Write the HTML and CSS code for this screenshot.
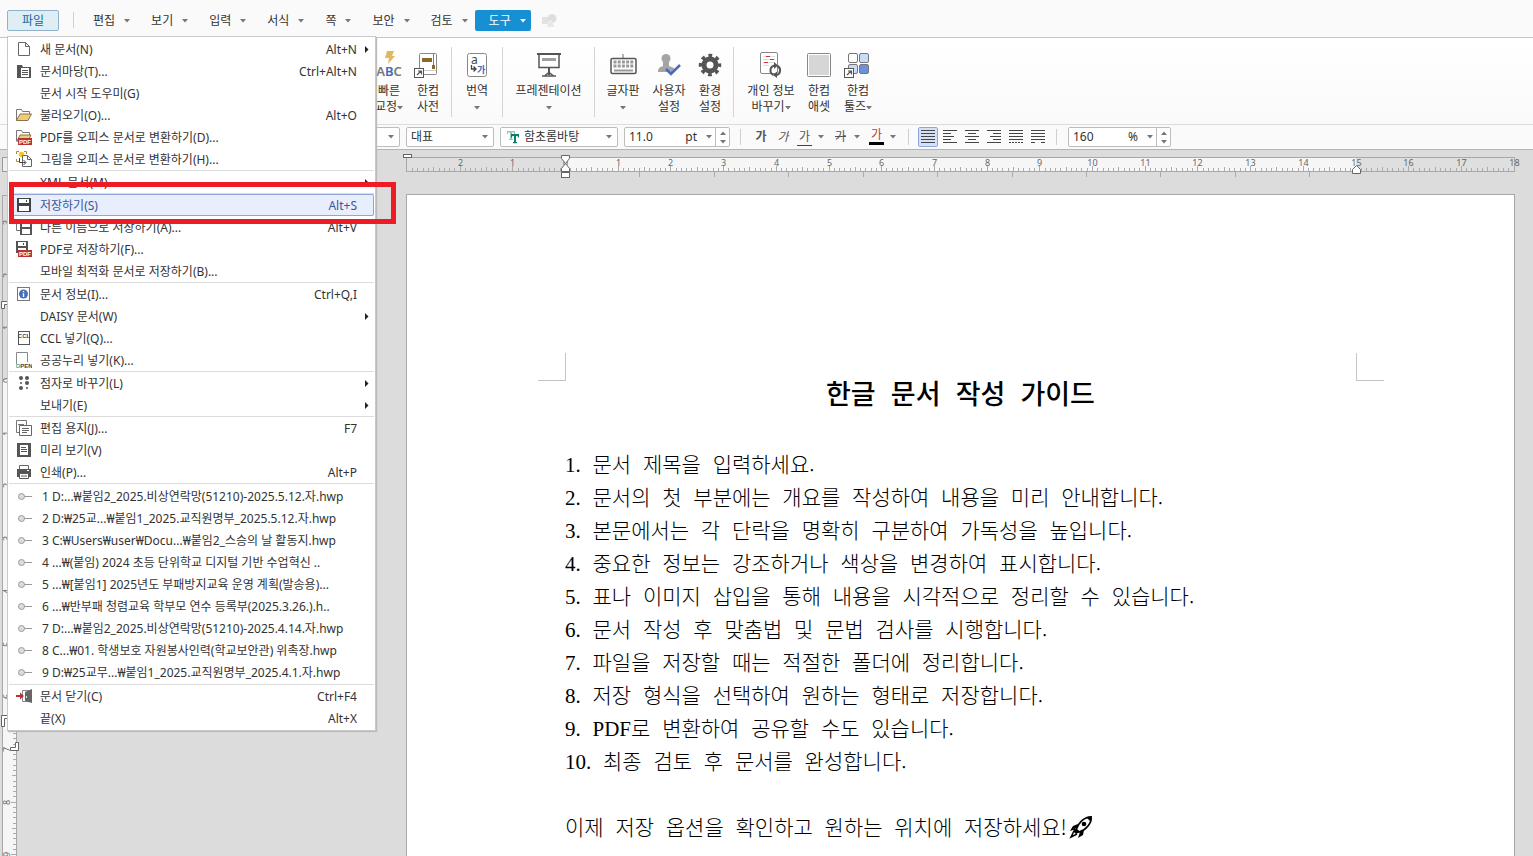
FILE: index.html
```html
<!DOCTYPE html>
<html lang="ko">
<head>
<meta charset="utf-8">
<title>한글 문서 작성 가이드</title>
<link rel="stylesheet" href="styles.css">
</head>
<body>
<svg class="defs" aria-hidden="true">
  <symbol id="down" viewBox="0 0 6 4"><path d="M0 0h6L3 3.5z" fill="currentColor"/></symbol>
  <symbol id="right" viewBox="0 0 5 7"><path d="M1 0v7l3.500-3.500z" fill="#222"/></symbol>
  <symbol id="pin" viewBox="0 0 16 16"><path d="M8 8.500h8" stroke="#999"/><circle cx="5.500" cy="8.500" r="3" fill="#ddd" stroke="#999"/></symbol>
</svg>

<header class="menubar">
  <button class="file-btn" type="button">파일</button>
  <span class="bar-sep"></span>
  <nav class="tabs">
    <button type="button">편집<svg class="down"><use href="#down"/></svg></button>
    <button type="button">보기<svg class="down"><use href="#down"/></svg></button>
    <button type="button">입력<svg class="down"><use href="#down"/></svg></button>
    <button type="button">서식<svg class="down"><use href="#down"/></svg></button>
    <button type="button">쪽<svg class="down"><use href="#down"/></svg></button>
    <button type="button">보안<svg class="down"><use href="#down"/></svg></button>
    <button type="button">검토<svg class="down"><use href="#down"/></svg></button>
    <button type="button" class="active">도구<svg class="down"><use href="#down"/></svg></button>
  </nav>
  <svg class="shapes" viewBox="0 0 15 13"><path d="M0 3h7v7H0z" fill="#e2e2e2"/><circle cx="10" cy="4.500" r="4.500" fill="#dedede"/><path d="M4 13l4.500-7 4.500 7z" fill="#e6e6e6" stroke="#fafafa" stroke-width=".6"/></svg>
</header>

<section class="ribbon">
  <button type="button" class="tool w-s">
    <svg viewBox="0 0 28 28"><path d="M12 0h7l-2 5h3l-7 8 1-6h-4z" fill="#e0b860"/><text x="14" y="25" text-anchor="middle" class="abc">A<tspan fill="#4468b8">B</tspan>C</text></svg>
    <span>빠른<br>교정<svg class="down"><use href="#down"/></svg></span>
  </button>
  <button type="button" class="tool w-m">
    <svg viewBox="0 0 28 28"><rect x="5.500" y="2.500" width="17" height="21" rx="1" fill="#fff" stroke="#888"/><path d="M19.500 3v14" stroke="#9c7a3c"/><path d="M8 7h10v4H8zM18 14h3v4h-3z" fill="#8a6a2c"/><path d="M6 19.500h16" stroke="#ccc"/><rect x=".5" y="17.500" width="9" height="9" fill="#fff" stroke="#555"/><path d="M3 24l4-4M4 20h3.500v3.500" fill="none" stroke="#555" stroke-width="1.200"/></svg>
    <span>한컴<br>사전</span>
  </button>
  <span class="ribbon-sep"></span>
  <button type="button" class="tool w-t">
    <svg viewBox="0 0 28 28"><rect x="4.500" y="2.500" width="19" height="23" rx="2" fill="#fff" stroke="#888"/><text x="8" y="13" font-size="12" fill="#444">a</text><path d="M8.500 14v4h4M10.500 15.500l2.500 2.500-2.500 2.500" fill="none" stroke="#444" stroke-width="1.300"/><text x="14" y="22" font-size="9" font-weight="700" fill="#4468b8">가</text></svg>
    <span>번역<br><svg class="down"><use href="#down"/></svg></span>
  </button>
  <span class="ribbon-sep"></span>
  <button type="button" class="tool w-p">
    <svg viewBox="0 0 28 28"><path d="M2 2h24v2H2z" fill="#555"/><path d="M4 4v12.500h20V4" fill="#fff" stroke="#555" stroke-width="1.500"/><path d="M7 7h14v3H7z" fill="#a0a0a0"/><path d="M14 17v7" stroke="#555" stroke-width="2"/><path d="M10 24.500l4-3 4 3M7 25h14" fill="none" stroke="#555" stroke-width="1.500"/></svg>
    <span>프레젠테이션<br><svg class="down"><use href="#down"/></svg></span>
  </button>
  <span class="ribbon-sep"></span>
  <button type="button" class="tool w-k">
    <svg viewBox="0 0 28 28"><path d="M14 3v5" stroke="#666"/><rect x="2" y="7.500" width="25" height="15" rx="1.500" fill="#fff" stroke="#555" stroke-width="1.500"/><path d="M4.500 11h20M4.500 15h20" stroke="#999" stroke-width="3" stroke-dasharray="3 1.200"/><path d="M5 19.500h19" stroke="#999" stroke-width="2"/></svg>
    <span>글자판<br><svg class="down"><use href="#down"/></svg></span>
  </button>
  <button type="button" class="tool w-u">
    <svg viewBox="0 0 28 28"><circle cx="11" cy="7.500" r="4.500" fill="#a5a5a5"/><path d="M8 11h6v4l5 2v4H3c0-4 2-5 5-6z" fill="#a5a5a5"/><path d="M11 18l5 5 9-9" fill="none" stroke="#4a6cb8" stroke-width="2.500"/></svg>
    <span>사용자<br>설정</span>
  </button>
  <button type="button" class="tool w-m">
    <svg viewBox="0 0 28 28"><circle cx="14" cy="14" r="6" fill="none" stroke="#555" stroke-width="5"/><circle cx="14" cy="14" r="9.500" fill="none" stroke="#555" stroke-width="3.500" stroke-dasharray="3.730 3.730" stroke-dashoffset="1.865"/></svg>
    <span>환경<br>설정</span>
  </button>
  <span class="ribbon-sep"></span>
  <button type="button" class="tool w-i">
    <svg viewBox="0 0 28 28"><rect x="3.500" y="1.500" width="17" height="21" rx="1.500" fill="#fff" stroke="#888"/><path d="M6 5.500h12M6 8.500h12M6 11.500h12M6 14.500h6" stroke="#ddd"/><path d="M9 5.500h4M13 8.500h4M7 11.500h4" stroke="#c33"/><path d="M16.500 24a5 5 0 0 1 1-9.500M20.500 15a5 5 0 0 1-.5 9" fill="none" stroke="#555" stroke-width="2"/><path d="M17 11l4 3.500-4 3.500zM20 20.500l-4 3.500 4 3z" fill="#555"/></svg>
    <span>개인 정보<br>바꾸기<svg class="down"><use href="#down"/></svg></span>
  </button>
  <button type="button" class="tool w-a">
    <svg viewBox="0 0 28 28"><rect x="2.500" y="2.500" width="23" height="23" rx="1" fill="#fff" stroke="#888"/><rect x="4" y="4" width="20" height="20" rx="1" fill="#d6d6d6"/></svg>
    <span>한컴<br>애셋</span>
  </button>
  <button type="button" class="tool w-k">
    <svg viewBox="0 0 28 28"><g stroke="#777"><rect x="4.500" y="2.500" width="9" height="9" rx="1.500" fill="#fff"/><rect x="15.500" y="2.500" width="9" height="9" rx="1.500" fill="#c9dafa"/><rect x="4.500" y="13.500" width="9" height="9" rx="1.500" fill="#c9dafa"/><rect x="15.500" y="13.500" width="9" height="9" rx="1.500" fill="#6a90de"/></g><rect x=".5" y="17.500" width="9" height="9" fill="#fff" stroke="#555"/><path d="M3 24l4-4M4 20h3.500v3.500" fill="none" stroke="#555" stroke-width="1.200"/></svg>
    <span>한컴<br>툴즈<svg class="down"><use href="#down"/></svg></span>
  </button>
</section>

<section class="format">
  <label class="combo style"><select aria-label="스타일"><option></option></select><svg class="down"><use href="#down"/></svg></label>
  <label class="combo lang"><select aria-label="언어"><option>대표</option></select><svg class="down"><use href="#down"/></svg></label>
  <label class="combo font"><svg class="tt" viewBox="0 0 14 14"><path d="M1 1h8v3H8V2.500H6V9h1v1H3V9h1V2.500H2V4H1z" fill="#8fcbb4"/><path d="M5 4h8v3.500h-1.200V6H10v6h1v1.200H7V12h1V6H6.200v1.500H5z" fill="#0b7f6d"/></svg><select aria-label="글꼴"><option>함초롬바탕</option></select><svg class="down"><use href="#down"/></svg></label>
  <div class="combo size"><input type="text" value="11.0" aria-label="글자 크기"><span>pt</span><svg class="down"><use href="#down"/></svg><div class="spin"><button type="button" aria-label="크게"><svg class="down up"><use href="#down"/></svg></button><button type="button" aria-label="작게"><svg class="down"><use href="#down"/></svg></button></div></div>
  <span class="bar-sep"></span>
  <div class="styles">
    <button type="button" class="bold">가</button>
    <button type="button" class="italic">가</button>
    <button type="button" class="wide"><span class="under">가</span><svg class="down"><use href="#down"/></svg></button>
    <button type="button" class="wide"><span class="strike">가</span><svg class="down"><use href="#down"/></svg></button>
    <button type="button" class="wide"><span class="color">가</span><svg class="down"><use href="#down"/></svg></button>
  </div>
  <span class="bar-sep"></span>
  <div class="aligns">
    <button type="button" class="on" aria-label="양쪽 정렬"><svg viewBox="0 0 14 14"><path d="M0 .5h14M0 3.500h14M0 6.500h14M0 9.500h14M0 12.500h14"/></svg></button>
    <button type="button" aria-label="왼쪽 정렬"><svg viewBox="0 0 14 14"><path d="M0 .5h14M0 3.500h8M0 6.500h11M0 9.500h8M0 12.500h14"/></svg></button>
    <button type="button" aria-label="가운데 정렬"><svg viewBox="0 0 14 14"><path d="M0 .5h14M3 3.500h8M0 6.500h14M3 9.500h8M0 12.500h14"/></svg></button>
    <button type="button" aria-label="오른쪽 정렬"><svg viewBox="0 0 14 14"><path d="M0 .5h14M6 3.500h8M3 6.500h11M6 9.500h8M0 12.500h14"/></svg></button>
    <button type="button" aria-label="배분 정렬"><svg viewBox="0 0 14 14"><path d="M0 .5h14M0 3.500h14M0 6.500h14M0 9.500h14"/><path d="M0 12.500h14" stroke-dasharray="2 1"/></svg></button>
    <button type="button" aria-label="나눔 정렬"><svg viewBox="0 0 14 14"><path d="M0 .5h14M0 3.500h14M0 6.500h14M0 9.500h14M0 12.500h4M10 12.500h4"/></svg></button>
  </div>
  <span class="bar-sep"></span>
  <div class="combo zoom"><input type="text" value="160" aria-label="줄 간격"><span>%</span><svg class="down"><use href="#down"/></svg><div class="spin"><button type="button" aria-label="늘리기"><svg class="down up"><use href="#down"/></svg></button><button type="button" aria-label="줄이기"><svg class="down"><use href="#down"/></svg></button></div></div>
</section>

<main class="work">
  <svg class="vruler" id="vruler" aria-hidden="true"></svg>
  <div class="desk">
    <svg class="hruler" id="hruler" aria-hidden="true"></svg>
    <article class="page">
      <div class="corners"><span class="corner left"></span><span class="corner right"></span></div>
      <div class="body">
        <h1>한글  문서  작성  가이드</h1>
        <p><span class="num">1.</span>  문서  제목을  입력하세요.</p>
        <p><span class="num">2.</span>  문서의  첫  부분에는  개요를  작성하여  내용을  미리  안내합니다.</p>
        <p><span class="num">3.</span>  본문에서는  각  단락을  명확히  구분하여  가독성을  높입니다.</p>
        <p><span class="num">4.</span>  중요한  정보는  강조하거나  색상을  변경하여  표시합니다.</p>
        <p><span class="num">5.</span>  표나  이미지  삽입을  통해  내용을  시각적으로  정리할  수  있습니다.</p>
        <p><span class="num">6.</span>  문서  작성  후  맞춤법  및  문법  검사를  시행합니다.</p>
        <p><span class="num">7.</span>  파일을  저장할  때는  적절한  폴더에  정리합니다.</p>
        <p><span class="num">8.</span>  저장  형식을  선택하여  원하는  형태로  저장합니다.</p>
        <p><span class="num">9.</span>  <span class="num">PDF</span>로  변환하여  공유할  수도  있습니다.</p>
        <p><span class="num">10.</span>  최종  검토  후  문서를  완성합니다.</p>
        <p class="last">이제  저장  옵션을  확인하고  원하는  위치에  저장하세요!<svg class="rocket" viewBox="0 0 24 24"><path d="M7 15C9 8 15 2 22 2c1 6-5 13-12 15z" fill="none" stroke="#000" stroke-width="1.700"/><path d="M17 2l5 5 1-6z"/><circle cx="15" cy="9" r="2.300"/><path d="M9 9L4 11l-3 5 6-2zM15 15l-1 5-5 3 2-6zM7 13l4 4-4 2-3-3z"/><path d="M5 16l-3 6 6-3" fill="none" stroke="#000" stroke-width="1.500"/></svg></p>
      </div>
    </article>
  </div>
</main>

<div class="menu" role="menu">
  <button type="button"><svg class="ic" viewBox="0 0 16 16"><path d="M2.500 1.500h7l4 4v9h-11zM9.500 1.500v4h4" fill="#fff" stroke="#666"/></svg><span>새 문서(N)</span><kbd>Alt+N</kbd><svg class="sub"><use href="#right"/></svg></button>
  <button type="button"><svg class="ic" viewBox="0 0 16 16"><path d="M1 2h5l1 2h8v11H1z" fill="#555"/><path d="M5 5h8v9H5z" fill="#fff"/><path d="M6 7.500h6M6 9.500h6M6 11.500h6" stroke="#555"/></svg><span>문서마당(T)...</span><kbd>Ctrl+Alt+N</kbd></button>
  <button type="button"><i class="ic"></i><span>문서 시작 도우미(G)</span></button>
  <button type="button"><svg class="ic" viewBox="0 0 16 16"><path d="M.5 13.500v-11h5l1 2h7V7" fill="#fff" stroke="#777"/><path d="M.5 13.500L4 7h11.500L12 13.500z" fill="#efcb7c" stroke="#8c7440"/></svg><span>불러오기(O)...</span><kbd>Alt+O</kbd></button>
  <button type="button"><svg class="ic" viewBox="0 0 16 16"><path d="M.5 12.500v-11h5l1 2h7V6" fill="#fff" stroke="#777"/><path d="M1 12l3-6h11l-3 6z" fill="#efcb7c" stroke="#8c7440"/><path d="M2 9h14v7H2z" fill="#b93336"/><text x="9" y="15" class="tag">PDF</text></svg><span>PDF를 오피스 문서로 변환하기(D)...</span></button>
  <button type="button"><svg class="ic" viewBox="0 0 16 16"><path d="M.5 3V.5H3M8 .5h2.500V3M.5 8v2.500H3" fill="none" stroke="#b18b36"/><circle cx="5.500" cy="3.500" r="2.800" fill="#f3c72d"/><path d="M6.500 4.500h5l4 4v7h-9z" fill="#fff" stroke="#666"/><path d="M11.500 4.500v4h4" fill="none" stroke="#666"/><path d="M3.500 7v4.500h6M7.500 9l2.500 2.500L7.500 14" fill="none" stroke="#444"/></svg><span>그림을 오피스 문서로 변환하기(H)...</span></button>
  <hr>
  <button type="button"><i class="ic"></i><span>XML 문서(M)</span><svg class="sub"><use href="#right"/></svg></button>
  <hr>
  <button type="button" class="hot"><svg class="ic" viewBox="0 0 16 16"><path d="M1 1h14v14H1z" fill="#444"/><path d="M3 2h10v4H3zM3 9h10v5H3z" fill="#fff"/><path d="M10 3h1v2h-1z" fill="#444"/></svg><span>저장하기(S)</span><kbd>Alt+S</kbd></button>
  <button type="button"><svg class="ic" viewBox="0 0 16 16"><path d="M.5 1.500h9v10h-9z" fill="#fff" stroke="#777"/><path d="M4 3h12v13H4z" fill="#555"/><path d="M6 4h8v4H6zM6 10h8v5H6z" fill="#fff"/></svg><span>다른 이름으로 저장하기(A)...</span><kbd>Alt+V</kbd></button>
  <button type="button"><svg class="ic" viewBox="0 0 16 16"><path d="M0 0h12v12H0z" fill="#555"/><path d="M2 1h8v4H2zM2 7h8v4H2z" fill="#fff"/><path d="M7 2h1v2H7z" fill="#444"/><path d="M2 9h14v7H2z" fill="#b93336"/><text x="9" y="15" class="tag">PDF</text></svg><span>PDF로 저장하기(F)...</span></button>
  <button type="button"><i class="ic"></i><span>모바일 최적화 문서로 저장하기(B)...</span></button>
  <hr>
  <button type="button"><svg class="ic" viewBox="0 0 16 16"><rect x="1.500" y="1.500" width="12" height="13" fill="#fff" stroke="#777"/><circle cx="7.500" cy="8" r="4.500" fill="#4a6fb8"/><path d="M7.500 5v1.300M7.500 7.300V11" stroke="#fff" stroke-width="1.400"/></svg><span>문서 정보(I)...</span><kbd>Ctrl+Q,I</kbd></button>
  <button type="button"><i class="ic"></i><span>DAISY 문서(W)</span><svg class="sub"><use href="#right"/></svg></button>
  <button type="button"><svg class="ic" viewBox="0 0 16 16"><rect x="2.500" y="1.500" width="11" height="13" fill="#fff" stroke="#555"/><text x="8" y="8" class="tag dark">CCL</text></svg><span>CCL 넣기(Q)...</span></button>
  <button type="button"><svg class="ic" viewBox="0 0 16 16"><path d="M.5 12V.5h11V10" fill="#fff" stroke="#888"/><text x="8" y="16" class="tag dark"><tspan fill="#3aa8a0">O</tspan>PEN</text></svg><span>공공누리 넣기(K)...</span></button>
  <hr>
  <button type="button"><svg class="ic" viewBox="0 0 16 16"><g fill="#555"><circle cx="5" cy="3" r="2"/><circle cx="11" cy="3" r="2"/><circle cx="5" cy="8" r="1"/><circle cx="11" cy="8" r="2"/><circle cx="5" cy="13" r="2"/><circle cx="11" cy="13" r="1"/></g></svg><span>점자로 바꾸기(L)</span><svg class="sub"><use href="#right"/></svg></button>
  <button type="button"><i class="ic"></i><span>보내기(E)</span><svg class="sub"><use href="#right"/></svg></button>
  <hr>
  <button type="button"><svg class="ic" viewBox="0 0 16 16"><path d="M.5.5h10v12H.5z" fill="#fff" stroke="#777"/><path d="M2 4.500h6" stroke="#777"/><path d="M3.500 5.500h12v10h-12z" fill="#fff" stroke="#666"/><path d="M6 8.500h7M6 10.500h7M6 12.500h5" stroke="#666"/></svg><span>편집 용지(J)...</span><kbd>F7</kbd></button>
  <button type="button"><svg class="ic" viewBox="0 0 16 16"><path d="M1 1h14v14H1z" fill="#555"/><path d="M4 3h8v10H4z" fill="#fff"/><path d="M5 5.500h5M5 7.500h6M5 9.500h6" stroke="#555"/></svg><span>미리 보기(V)</span></button>
  <button type="button"><svg class="ic" viewBox="0 0 16 16"><path d="M3.500 1.500h9v4h-9z" fill="#fff" stroke="#666"/><path d="M1 5h14v8H1z" fill="#555"/><path d="M11 6.500h2" stroke="#fff"/><path d="M3.500 9.500h9v5h-9z" fill="#fff" stroke="#555"/><path d="M5 12h6" stroke="#555"/></svg><span>인쇄(P)...</span><kbd>Alt+P</kbd></button>
  <hr>
  <div class="recent">
    <button type="button"><svg class="ic"><use href="#pin"/></svg><span>1 D:...₩붙임2_2025.비상연락망(51210)-2025.5.12.자.hwp</span></button>
    <button type="button"><svg class="ic"><use href="#pin"/></svg><span>2 D:₩25교...₩붙임1_2025.교직원명부_2025.5.12.자.hwp</span></button>
    <button type="button"><svg class="ic"><use href="#pin"/></svg><span>3 C:₩Users₩user₩Docu...₩붙임2_스승의 날 활동지.hwp</span></button>
    <button type="button"><svg class="ic"><use href="#pin"/></svg><span>4 ...₩(붙임) 2024 초등 단위학교 디지털 기반 수업혁신 ..</span></button>
    <button type="button"><svg class="ic"><use href="#pin"/></svg><span>5 ...₩[붙임1] 2025년도 부패방지교육 운영 계획(발송용)...</span></button>
    <button type="button"><svg class="ic"><use href="#pin"/></svg><span>6 ...₩반부패 청렴교육 학부모 연수 등록부(2025.3.26.).h..</span></button>
    <button type="button"><svg class="ic"><use href="#pin"/></svg><span>7 D:...₩붙임2_2025.비상연락망(51210)-2025.4.14.자.hwp</span></button>
    <button type="button"><svg class="ic"><use href="#pin"/></svg><span>8 C...₩01. 학생보호 자원봉사인력(학교보안관) 위촉장.hwp</span></button>
    <button type="button"><svg class="ic"><use href="#pin"/></svg><span>9 D:₩25교무...₩붙임1_2025.교직원명부_2025.4.1.자.hwp</span></button>
  </div>
  <hr>
  <button type="button"><svg class="ic" viewBox="0 0 16 16"><path d="M6.500 2.500h9v11h-9z" fill="#fff" stroke="#888"/><path d="M9 4l7-3v14l-7-2z" fill="#666"/><path d="M10.500 8v2" stroke="#ddd"/><path d="M0 7h4V4.500L8 8l-4 3.500V9H0z" fill="#b93336"/></svg><span>문서 닫기(C)</span><kbd>Ctrl+F4</kbd></button>
  <button type="button"><i class="ic"></i><span>끝(X)</span><kbd>Alt+X</kbd></button>
</div>
<div class="highlight"></div>
<script src="rulers.js"></script>
</body>
</html>
```

FILE: styles.css
```css
* { box-sizing: border-box; }
html, body { height: 100%; }
body {
  margin: 0;
  display: flex;
  flex-direction: column;
  overflow: hidden;
  background: #dcdcdc;
  color: #333;
  font: 12px/16px "Noto Sans", "Noto Sans CJK KR", sans-serif;
}
button, input, select {
  font: inherit;
  color: inherit;
  background: none;
  border: 0;
  padding: 0;
  margin: 0;
}
svg { display: block; flex: none; }
.defs { position: absolute; width: 0; height: 0; }
.down { width: 6px; height: 4px; color: #777; }
.up { transform: rotate(180deg); }
.bar-sep { width: 1px; height: 16px; background: #d0d0d0; flex: none; }

.menubar {
  flex: none;
  display: flex;
  align-items: center;
  height: 38px;
  padding: 3px 7px 0;
  background: #fafafa;
  border-bottom: 1px solid #c6c6c6;
}
.file-btn {
  width: 52px;
  height: 21px;
  margin-right: 14px;
  padding-top: 1px;
  border: 1px solid #8db4c8;
  border-radius: 2px;
  background: #dfeef4;
  color: #0d6799;
}
.tabs { display: flex; gap: 2px; margin-left: 5px; }
.tabs button {
  display: flex;
  align-items: center;
  gap: 9px;
  height: 21px;
  padding: 1px 5px 0 14px;
  border-radius: 2px;
}
.tabs .active { background: #1690d2; color: #fff; }
.tabs .active .down { color: #fff; }
.shapes { width: 15px; height: 13px; margin-left: 11px; }

.ribbon {
  flex: none;
  display: flex;
  align-items: flex-start;
  height: 86px;
  padding: 13px 0 0 370px;
  background: linear-gradient(#fff, #fafafa);
}
.tool { display: flex; flex-direction: column; align-items: center; gap: 4px; text-align: center; white-space: nowrap; }
.tool > svg { width: 28px; height: 28px; }
.tool .down { display: inline-block; vertical-align: middle; }
.w-a { width: 28px; }
.w-s { width: 38px; }
.w-m { width: 40px; }
.w-u { width: 42px; }
.w-t { width: 44px; }
.w-k { width: 50px; }
.w-i { width: 68px; }
.w-p { width: 85px; }
.abc { font: 600 13px "Noto Sans", sans-serif; fill: #777; }
.ribbon-sep { width: 1px; height: 70px; margin: -4px 3px 0; background: #d4d4d4; }

.format {
  flex: none;
  display: flex;
  align-items: center;
  height: 26px;
  padding-left: 300px;
  background: #fafafa;
  border-top: 1px solid #dcdcdc;
  border-bottom: 1px solid #b4b4b4;
}
.combo {
  display: flex;
  align-items: center;
  height: 20px;
  margin-right: 6px;
  padding: 0 5px 0 4px;
  border: 1px solid #bdbdbd;
  border-radius: 2px;
  background: #fff;
}
.combo select { appearance: none; flex: 1; min-width: 0; outline: 0; }
.combo input { flex: 1; min-width: 0; outline: 0; }
.tt { width: 14px; height: 14px; margin: 0 4px 0 1px; }
.style { width: 100px; }
.lang { width: 88px; }
.font { width: 118px; }
.size { width: 106px; padding-right: 0; margin-right: 10px; }
.zoom { width: 103px; padding-right: 0; margin-left: 11px; }
.combo span { margin-right: 9px; }
.spin { display: flex; flex-direction: column; width: 14px; height: 18px; margin-left: 3px; border-left: 1px solid #bdbdbd; }
.spin button { flex: 1; display: grid; place-items: center; }
.styles { display: flex; margin: 0 6px 0 9px; color: #555; }
.styles button { display: flex; align-items: center; justify-content: center; height: 20px; width: 22px; }
.styles .wide { width: 36px; justify-content: flex-start; gap: 6px; padding-left: 3px; }
.styles .bold { font-weight: 700; }
.styles .italic { font-style: italic; }
.styles span { width: 15px; height: 17px; text-align: center; }
.under { border-bottom: 1px solid #444; }
.strike { text-decoration: line-through; }
.styles .color { height: 16px; border-bottom: 3px solid #000; color: #c0393b; line-height: 12px; }
.aligns { display: flex; gap: 2px; margin: 0 8px 0 9px; }
.aligns button { display: grid; place-items: center; width: 20px; height: 20px; border: 1px solid transparent; border-radius: 2px; }
.aligns .on { border-color: #8ea6dc; background: #d6e1f8; }
.aligns svg { width: 14px; height: 14px; fill: none; stroke: #444; }

.work { flex: 1; min-height: 0; display: flex; }
.vruler { width: 20px; height: 100%; }
.desk { flex: 1; display: flex; flex-direction: column; padding: 0 18px 0 386px; }
.hruler { width: 100%; height: 44px; overflow: visible; }
.rule-num { font: 9px "Noto Sans", sans-serif; fill: #666; text-anchor: middle; }
.page { flex: 1; background: #fff; border: 1px solid #a8a8a8; border-bottom: 0; }
.corners { display: flex; justify-content: space-between; padding: 158px 130px 0 131px; }
.corner { width: 28px; height: 28px; border-bottom: 1px solid #c4c4c4; }
.left { border-right: 1px solid #c4c4c4; }
.right { border-left: 1px solid #c4c4c4; }
.body {
  padding: 0 158px;
  color: #000;
  font: 300 21px/33px "Noto Sans CJK KR", sans-serif;
}
.body h1 { margin: -5px 0 38px; font-size: 27px; line-height: 33px; font-weight: 500; text-align: center; white-space: pre-wrap; }
.body p { margin: 0; white-space: pre-wrap; }
.body .last { display: flex; align-items: center; margin-top: 33px; }
.num { font-family: "Liberation Serif", serif; line-height: 1; }
.rocket { width: 24px; height: 24px; margin-left: 2px; }

.menu {
  position: absolute;
  left: 7px;
  top: 36px;
  width: 369px;
  padding: 1px 0;
  background: #fff;
  border: 1px solid #c8c8c8;
  box-shadow: 1px 1px 1px #bbb;
}
.menu hr { height: 1px; margin: 0 1px; border: 0; background: #dcdcdc; }
.menu button {
  display: flex;
  align-items: center;
  width: 100%;
  height: 22px;
  padding: 0 18px 0 8px;
  white-space: nowrap;
}
.menu span, .menu kbd { padding-top: 1px; }
.menu .ic { width: 16px; height: 16px; margin-right: 8px; }
.menu kbd { margin-left: auto; font: inherit; }
.menu .sub { width: 5px; height: 7px; margin: 0 -12px 0 auto; }
.menu kbd + .sub { margin-left: 7px; }
.menu .hot {
  width: calc(100% - 2px);
  margin: 0 1px;
  padding: 0 17px 0 7px;
  color: #3a559b;
  background: #e8eefb;
  border-radius: 2px;
  box-shadow: inset 0 0 0 1px #8fa6db;
}
.recent { padding: 1px 0; }
.menu .recent .ic { margin-right: 10px; }
.menu .recent button { padding-right: 0; }
.tag { font: 700 6px "Liberation Sans", sans-serif; fill: #fff; text-anchor: middle; }
.dark { fill: #444; }
.highlight { position: absolute; left: 9px; top: 182px; width: 387px; height: 42px; border: 5px solid #ed1c24; }
```

FILE: rulers.js
```js
const NS = "http://www.w3.org/2000/svg";
const CM = 52.7;

function add(parent, name, attrs, text) {
  const el = document.createElementNS(NS, name);
  for (const key in attrs) el.setAttribute(key, attrs[key]);
  if (text !== undefined) el.textContent = text;
  parent.appendChild(el);
}

function tickLength(i) {
  return i % 10 === 0 ? 5 : i % 5 === 0 ? 4 : 3;
}

const h = document.getElementById("hruler");
const end = h.clientWidth;
const zero = 159;
const marginEnd = zero + Math.round(15 * CM);
add(h, "rect", { x: 0, y: 7, width: end, height: 14, fill: "#dfdfdf" });
add(h, "rect", { x: zero, y: 7, width: marginEnd - zero, height: 14, fill: "#f6f6f6" });
add(h, "path", { d: `M0 7.500H${end}M0 21.500H${end}M.5 7V22M${end - 0.5} 7V22`, stroke: "#a8a8a8", fill: "none" });
for (let i = -29; i <= 180; i++) {
  const x = Math.round(zero + i * CM / 10) + 0.5;
  if (x > end) continue;
  add(h, "path", { d: `M${x} 21v-${tickLength(i)}`, stroke: "#aaa" });
  if (i % 10 === 0) add(h, "text", { x: x, y: 16, class: "rule-num" }, Math.abs(i / 10));
}
for (let i = 1; i <= 10; i++) {
  const x = Math.round(zero + i * 74.43) + 0.5;
  add(h, "path", { d: `M${x} 22v5`, stroke: "#aaa" });
}
const marker = { fill: "#fff", stroke: "#666" };
add(h, "rect", { x: -2.5, y: 4.5, width: 8, height: 3, ...marker });
add(h, "path", { d: `M${zero - 3.5} 5.500h8v3l-4 5-4-5zM${zero - 3.5} 21.500v-3l4-5 4 5v3z`, ...marker });
add(h, "rect", { x: zero - 3.5, y: 22.5, width: 8, height: 5, ...marker });
add(h, "path", { d: `M${marginEnd - 3.5} 23.500v-4l4-4 4 4v4z`, ...marker });

const v = document.getElementById("vruler");
const bottom = v.clientHeight;
const top0 = 230;
add(v, "rect", { x: 2.5, y: 7.5, width: 14, height: 14, fill: "#eee", stroke: "#999" });
add(v, "rect", { x: 3, y: top0, width: 13, height: bottom, fill: "#f6f6f6" });
add(v, "path", { d: `M2.500 45V${bottom}M16.500 45V${bottom}M2 45.500H17`, stroke: "#a8a8a8", fill: "none" });
for (let i = -35; i <= 95; i++) {
  const y = Math.round(top0 + i * CM / 10) + 0.5;
  if (y > bottom) continue;
  add(v, "path", { d: `M16 ${y}h-${tickLength(i)}`, stroke: "#aaa" });
  if (i % 10 === 0) add(v, "text", { transform: `translate(10 ${y}) rotate(-90)`, class: "rule-num" }, Math.abs(i / 10));
}
add(v, "path", { d: "M1.500 151.500h7v3h-4v4h-3zM1.500 565.500h7v3h-4v8h-3zM15.500 592.500h3v8h-8v-3h5z", ...marker });
```
